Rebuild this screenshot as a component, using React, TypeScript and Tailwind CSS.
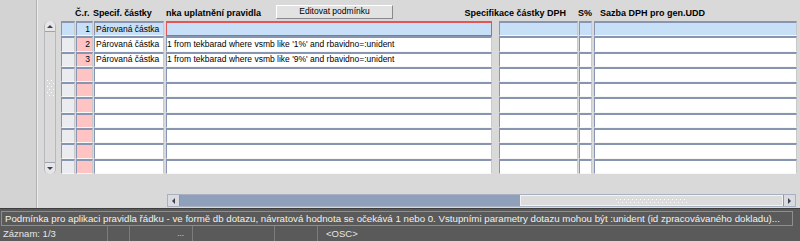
import React from 'react'

const FONT = { fontFamily: '"Liberation Sans", Arial, sans-serif' }

type Row = { n: string; spec: string; cond: string; sel?: boolean }

const ROWS: Row[] = [
  { n: '1', spec: 'Párovaná částka', cond: '', sel: true },
  { n: '2', spec: 'Párovaná částka', cond: "1 from tekbarad where vsmb like '1%' and rbavidno=:unident" },
  { n: '3', spec: 'Párovaná částka', cond: "1 from tekbarad where vsmb like '9%' and rbavidno=:unident" },
  { n: '', spec: '', cond: '' },
  { n: '', spec: '', cond: '' },
  { n: '', spec: '', cond: '' },
  { n: '', spec: '', cond: '' },
  { n: '', spec: '', cond: '' },
  { n: '', spec: '', cond: '' },
  { n: '', spec: '', cond: '' },
]

const cell =
  'h-full flex items-center overflow-hidden whitespace-nowrap leading-none border-t-2 border-l border-b border-r border-t-[#8795b0] border-l-[#8795b0] border-b-[#f7f7f7] border-r-[#c9c9c9]'

function Dots({ cols, rows }: { cols: number; rows: number }) {
  return (
    <div className="flex flex-col gap-[2px]">
      {Array.from({ length: rows }).map((_, r) => (
        <div key={r} className={`flex gap-[3px] ${r % 2 ? 'pl-[2px]' : ''}`}>
          {Array.from({ length: cols }).map((_, c) => (
            <span key={c} className="w-px h-px bg-white" />
          ))}
        </div>
      ))}
    </div>
  )
}

function VScroll() {
  return (
    <div className="ml-[6px] w-[12px] h-[153px] flex flex-col border-x border-[#b9b9bd] bg-[#dadada] rounded-[5px]">
      <div className="h-[11px] rounded-t-[5px] border-b border-[#9ea3b0] bg-[#e6e6e8] flex items-center justify-center">
        <div className="w-0 h-0 border-x-[3px] border-x-transparent border-b-[3px] border-b-[#3c4150]" />
      </div>
      <div className="flex-1 flex flex-col items-center pt-[48px]">
        <Dots cols={2} rows={6} />
      </div>
      <div className="h-[12px] rounded-b-[5px] border-t border-[#9ea3b0] bg-[#e6e6e8] flex items-center justify-center">
        <div className="w-0 h-0 border-x-[3px] border-x-transparent border-t-[3px] border-t-[#3c4150]" />
      </div>
    </div>
  )
}

function GridRow({ r }: { r: Row }) {
  const sel = r.sel
  const bg = sel ? 'bg-[#c7e0f8]' : 'bg-white'
  return (
    <div className="flex h-[15.3px] text-[8.5px] text-black">
      <div className={`ml-[5px] w-[14px] ${cell} ${sel ? 'bg-[#c7e0f8]' : 'bg-[#eaecf0]'}`} />
      <div className={`ml-px w-[17px] ${cell} justify-end pr-[2px] ${sel ? 'bg-[#c7e0f8]' : 'bg-[#ffc3c3]'}`}>{r.n}</div>
      <div className={`ml-px w-[70px] ${cell} pl-[1px] ${bg}`}>{r.spec}</div>
      {sel ? (
        <div className="ml-[2px] w-[326px] h-full border border-[#e2565a] border-t-2 bg-[#c7e0f8]" />
      ) : (
        <div className={`ml-[2px] w-[326px] ${cell} ${bg}`}>{r.cond}</div>
      )}
      <div className={`ml-[7px] w-[79px] ${cell} ${bg}`} />
      <div className={`ml-px w-[13px] ${cell} ${bg}`} />
      <div className={`ml-[2px] w-[203px] ${cell} ${bg}`} />
    </div>
  )
}

function Header() {
  return (
    <div className="flex h-[21px] items-center pt-[5px] text-[9px] font-bold text-black whitespace-nowrap leading-none">
      <div className="w-[18px]" />
      <div className="ml-[5px] w-[14px]" />
      <div className="ml-px w-[17px] -indent-[1px]">Č.r.</div>
      <div className="ml-px w-[70px] -indent-[1px] tracking-[-0.1px]">Specif. částky</div>
      <div className="ml-[2px] w-[326px] flex items-center">
        <div className="w-[110px]">nka uplatnění pravidla</div>
        <button className="-mt-[3px] w-[117px] h-[14px] bg-[#e2e2e2] border border-t-white border-l-white border-r-[#8a8a8a] border-b-[#8a8a8a] text-[8.5px] font-normal text-black leading-none">
          Editovat podmínku
        </button>
      </div>
      <div className="ml-[7px] w-[79px] flex justify-end pr-[12px]">Specifikace částky DPH</div>
      <div className="ml-px w-[13px] -indent-[1px]">S%</div>
      <div className="ml-[2px] w-[203px] pl-[6px]">Sazba DPH pro gen.UDD</div>
    </div>
  )
}

function HScroll() {
  return (
    <div className="mt-[20px] ml-[129px] w-[629px] h-[13px] flex border border-[#a9b0bf] bg-[#8fa0bb]">
      <div className="w-[12px] h-full bg-[#d9dbe0] border-r border-[#8c96aa] flex items-center justify-center">
        <div className="w-0 h-0 border-y-[3px] border-y-transparent border-r-[3px] border-r-[#3c4150]" />
      </div>
      <div className="w-[340px]" />
      <div className="flex-1 h-full bg-[#dcdcdc] border border-[#f2f2f2] flex items-center justify-center">
        <Dots cols={18} rows={2} />
      </div>
      <div className="w-[12px] h-full bg-[#d9dbe0] border-l border-[#8c96aa] flex items-center justify-center">
        <div className="w-0 h-0 border-y-[3px] border-y-transparent border-l-[3px] border-l-[#3c4150]" />
      </div>
    </div>
  )
}

export default function App() {
  return (
    <div className="w-[800px] h-[241px] overflow-hidden flex flex-col bg-[#d9d9d9]" style={FONT}>
      <div className="h-[208px] flex">
        <div className="w-[37px] h-full bg-[#d3d3d3] border-r border-[#b3b3b3]" />
        <div className="flex-1 flex flex-col border-l border-[#ececec]">
          <Header />
          <div className="flex">
            <VScroll />
            <div className="flex flex-col">
              {ROWS.map((r, i) => (
                <GridRow key={i} r={r} />
              ))}
            </div>
          </div>
          <HScroll />
        </div>
      </div>

      {/* Status */}
      <div className="flex-1 bg-[#5a5a5a] border-t border-[#3e3e3e] flex flex-col pt-[2px] text-[#f1f1f1] leading-none whitespace-nowrap">
        <div className="mx-[1px] w-[792px] h-[15px] border border-[#8e8e8e] flex items-center pl-[3px] text-[9.7px] overflow-hidden">
          Podmínka pro aplikaci pravidla řádku - ve formě db dotazu, návratová hodnota se očekává 1 nebo 0. Vstupními parametry dotazu mohou být :unident (id zpracovávaného dokladu)...
        </div>
        <div className="flex-1 flex text-[9.5px] text-[#e6e6e6]">
          <div className="w-[108px] pl-[3px] flex items-center border-r border-[#7c7c7c]">Záznam: 1/3</div>
          <div className="w-[22px] border-r border-[#7c7c7c]" />
          <div className="w-[63px] border-r border-[#7c7c7c] flex items-center justify-end pr-[8px] text-[8px]">...</div>
          <div className="w-[82px] border-r border-[#7c7c7c]" />
          <div className="w-[43px] border-r border-[#7c7c7c]" />
          <div className="pl-[8px] flex items-center">&lt;OSC&gt;</div>
        </div>
      </div>
    </div>
  )
}
